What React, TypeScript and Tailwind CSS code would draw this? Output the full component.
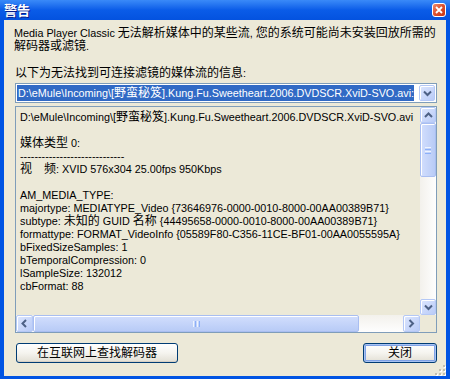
import React from "react";

const CJK = /([\u2E80-\u9FFF\uFF00-\uFFEF]+)/;

// CJK runs are drawn a pixel larger, like SimSun next to Tahoma
const T = ({ s }: { s: string }) => (
  <>
    {s.split(CJK).map((part, i) =>
      i % 2 ? (
        <span key={i} className="text-[12px]">
          {part}
        </span>
      ) : (
        part
      )
    )}
  </>
);

const Chevron = ({ dir }: { dir: "up" | "down" | "left" | "right" }) => {
  const d = {
    up: "M1 5 L4.5 1.5 L8 5",
    down: "M1 1.5 L4.5 5 L8 1.5",
    left: "M5 1 L1.5 4.5 L5 8",
    right: "M1.5 1 L5 4.5 L1.5 8",
  }[dir];
  const vertical = dir === "up" || dir === "down";
  return (
    <svg
      width={vertical ? 9 : 7}
      height={vertical ? 7 : 9}
      viewBox={vertical ? "0 0 9 7" : "0 0 7 9"}
    >
      <path d={d} fill="none" stroke="#4d6185" strokeWidth="2" />
    </svg>
  );
};

const ScrollBtn = ({ dir }: { dir: "up" | "down" | "left" | "right" }) => (
  <div className="flex h-[16px] w-[16px] shrink-0 items-center justify-center rounded-[2px] border border-[#b4c8f6] bg-gradient-to-br from-[#dce6fe] to-[#b9cbf7] shadow-[inset_1px_1px_0_#ffffff]">
    <Chevron dir={dir} />
  </div>
);

const lines = [
  "D:\\eMule\\Incoming\\[野蛮秘笈].Kung.Fu.Sweetheart.2006.DVDSCR.XviD-SVO.avi",
  "",
  "媒体类型 0:",
  "-----------------------------",
  "视　频: XVID 576x304 25.00fps 950Kbps",
  "",
  "AM_MEDIA_TYPE:",
  "majortype: MEDIATYPE_Video {73646976-0000-0010-8000-00AA00389B71}",
  "subtype: 未知的 GUID 名称 {44495658-0000-0010-8000-00AA00389B71}",
  "formattype: FORMAT_VideoInfo {05589F80-C356-11CE-BF01-00AA0055595A}",
  "bFixedSizeSamples: 1",
  "bTemporalCompression: 0",
  "lSampleSize: 132012",
  "cbFormat: 88",
];

const XpButton = ({
  label,
  width,
  isDefault,
}: {
  label: string;
  width: string;
  isDefault?: boolean;
}) => (
  <button
    className={`${width} flex h-[20px] items-center justify-center rounded-[3px] border border-[#003c74] bg-gradient-to-b from-white via-[#f5f4ef] to-[#e2dfd4] text-[12px] text-black ${
      isDefault
        ? "shadow-[inset_0_0_0_1px_#a8c3f2,inset_0_0_0_2px_#7fa2e6]"
        : "shadow-[inset_0_-1px_0_#d6d0c5]"
    }`}
  >
    {label}
  </button>
);

export default function App() {
  return (
    <div className="flex h-[379px] w-[450px] flex-col overflow-hidden bg-[#0054e3] font-['Liberation_Sans','Noto_Sans_CJK_SC',sans-serif] text-[10.8px] text-black">
      {/* title bar */}
      <div className="flex h-[20px] shrink-0 items-center justify-between bg-gradient-to-b from-[#3a8af8] via-[#0a5ce8] to-[#0452df] pl-[4px] pr-[4px]">
        <span className="text-[13px] font-bold leading-none text-white [text-shadow:1px_1px_#0a1d8a]">
          警告
        </span>
        <div className="flex h-[14px] w-[14px] items-center justify-center rounded-[3px] border border-white bg-gradient-to-br from-[#ee8a6c] via-[#dc4f2c] to-[#c63412]">
          <svg width="8" height="8" viewBox="0 0 8 8">
            <path d="M1 1 L7 7 M7 1 L1 7" stroke="#ffffff" strokeWidth="1.8" />
          </svg>
        </div>
      </div>

      {/* client area */}
      <div className="relative mx-[4px] mb-[3px] flex flex-1 flex-col bg-[#ece9d8] pl-[11px] pr-[9px] pt-[7px]">
        <p className="ml-[-1px] leading-[13px]">
          <T s="Media Player Classic 无法解析媒体中的某些流, 您的系统可能尚未安装回放所需的" />
          <br />
          <T s="解码器或滤镜." />
        </p>

        <p className="mt-[14px] leading-[13px]">
          <T s="以下为无法找到可连接滤镜的媒体流的信息:" />
        </p>

        {/* combobox */}
        <div className="mt-[3px] flex h-[20px] items-stretch border border-[#7f9db9] bg-white">
          <div className="my-[1px] ml-[1px] mr-[5px] flex flex-1 items-center overflow-hidden whitespace-nowrap bg-[#316ac5] pl-[1px] text-white outline-1 outline-dotted outline-[#ffffff]/40">
            <T s="D:\eMule\Incoming\[野蛮秘笈].Kung.Fu.Sweetheart.2006.DVDSCR.XviD-SVO.avi:" />
          </div>
          <div className="my-[1px] mr-[1px] flex w-[16px] items-center justify-center rounded-[2px] border border-[#b4c8f6] bg-gradient-to-br from-[#dce6fe] to-[#b9cbf7] shadow-[inset_1px_1px_0_#ffffff]">
            <Chevron dir="down" />
          </div>
        </div>

        {/* read-only edit with scrollbars */}
        <div className="mt-[3px] grid h-[227px] grid-cols-[1fr_16px] grid-rows-[1fr_17px] border border-[#7f9db9] bg-[#ece9d8]">
          <div className="overflow-hidden pl-[4px] pt-[4px]">
            {lines.map((l, i) => (
              <div key={i} className="h-[13px] whitespace-pre leading-[13px]">
                <T s={l} />
              </div>
            ))}
          </div>

          <div className="flex flex-col bg-gradient-to-r from-[#f3f1ec] to-[#fefefe]">
            <ScrollBtn dir="up" />
            <div className="flex h-[54px] w-[16px] items-center justify-center rounded-[2px] border border-[#a9bef1] bg-gradient-to-r from-[#d2defd] to-[#b8cbf6] shadow-[inset_1px_1px_0_#ffffff]">
              <div className="flex flex-col gap-[1px]">
                <div className="h-[1px] w-[6px] bg-[#eef4fe]" />
                <div className="h-[1px] w-[6px] bg-[#8cb0f8]" />
                <div className="h-[1px] w-[6px] bg-[#eef4fe]" />
                <div className="h-[1px] w-[6px] bg-[#8cb0f8]" />
              </div>
            </div>
            <div className="flex-1" />
            <ScrollBtn dir="down" />
          </div>

          <div className="flex items-stretch bg-gradient-to-b from-[#f3f1ec] to-[#fefefe]">
            <div className="flex h-[17px] w-[17px] items-center justify-center rounded-[2px] border border-[#b4c8f6] bg-gradient-to-br from-[#dce6fe] to-[#b9cbf7] shadow-[inset_1px_1px_0_#ffffff]">
              <Chevron dir="left" />
            </div>
            <div className="flex w-[326px] items-center justify-center rounded-[2px] border border-[#a9bef1] bg-gradient-to-b from-[#d2defd] to-[#b8cbf6] shadow-[inset_1px_1px_0_#ffffff]">
              <div className="flex gap-[1px]">
                <div className="h-[6px] w-[1px] bg-[#eef4fe]" />
                <div className="h-[6px] w-[1px] bg-[#8cb0f8]" />
                <div className="h-[6px] w-[1px] bg-[#eef4fe]" />
                <div className="h-[6px] w-[1px] bg-[#8cb0f8]" />
              </div>
            </div>
            <div className="flex-1" />
            <div className="flex h-[17px] w-[17px] items-center justify-center rounded-[2px] border border-[#b4c8f6] bg-gradient-to-br from-[#dce6fe] to-[#b9cbf7] shadow-[inset_1px_1px_0_#ffffff]">
              <Chevron dir="right" />
            </div>
          </div>

          <div className="bg-[#ece9d8]" />
        </div>

        {/* buttons */}
        <div className="mt-[10px] flex justify-between pl-[1px]">
          <XpButton label="在互联网上查找解码器" width="w-[162px]" />
          <XpButton label="关闭" width="w-[74px]" isDefault />
        </div>

        {/* size grip */}
        <svg
          className="absolute bottom-0 right-0"
          width="11"
          height="11"
          viewBox="0 0 11 11"
        >
          {[
            [8, 0],
            [8, 4],
            [4, 4],
            [8, 8],
            [4, 8],
            [0, 8],
          ].map(([x, y], i) => (
            <g key={i}>
              <rect x={x + 1} y={y + 1} width="2" height="2" fill="#ffffff" />
              <rect x={x} y={y} width="2" height="2" fill="#c2bfb0" />
            </g>
          ))}
        </svg>
      </div>
    </div>
  );
}
